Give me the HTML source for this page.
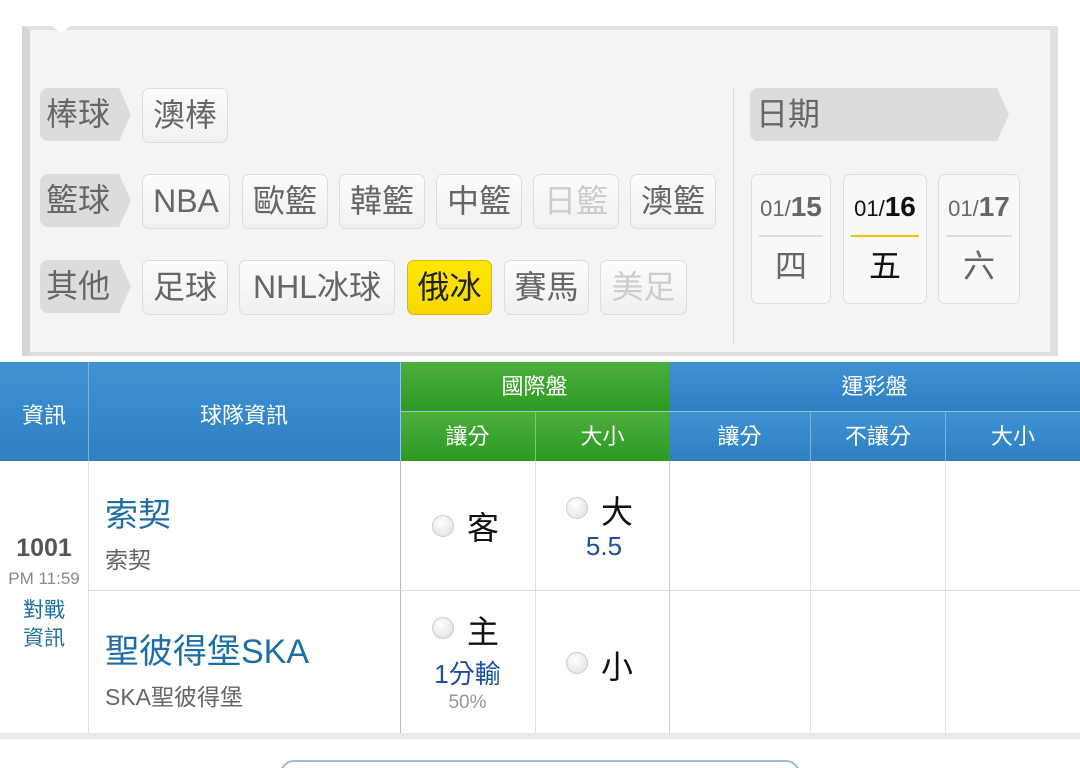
<!DOCTYPE html>
<html><head><meta charset="utf-8"><style>
*{margin:0;padding:0;box-sizing:border-box}
html,body{width:1080px;height:768px;overflow:hidden}
body{background:#fff;position:relative;font-family:"Liberation Sans","Noto Sans CJK TC",sans-serif}
.a{position:absolute}
.panel{left:22px;top:26px;width:1036px;height:330px;background:#f4f4f4;border-left:8px solid #d6d6d6;border-right:8px solid #e0e0e0;border-top:4px solid #e2e2e2;border-bottom:4px solid #dcdcdc}
.lab{position:absolute;height:53px;background:#dcdcdc;border-radius:8px 0 0 8px;color:#666;font-size:32px;line-height:53px;padding-left:6px;clip-path:polygon(0 0,calc(100% - 12px) 0,100% 50%,calc(100% - 12px) 100%,0 100%)}
.b{position:absolute;height:55px;border:1px solid #ddd;border-radius:7px;background:linear-gradient(#fcfcfc,#f0f0f0);color:#666;font-size:32px;line-height:53px;text-align:center}
.f{color:#ccc}
.y{background:linear-gradient(#ffe800,#f8d800);border-color:#d8b800;color:#222}
.d{position:absolute;top:174px;height:130px;border:1px solid #ddd;border-radius:7px;background:#f8f8f8;text-align:center;color:#666}
.d .t{height:62px;line-height:64px;font-size:22px;border-bottom:2px solid #ddd;margin:0 7px}
.d .t b{font-size:28px}
.d .w{font-size:32px;line-height:58px}
.hd{position:absolute;color:#fff;font-size:22px;text-align:center}
.bl{background:linear-gradient(#3d93d2,#2f7fc3)}
.gr{background:linear-gradient(#4caf3c,#2d9a22)}
.vl{position:absolute;width:1px;background:#ccc}
.hl{position:absolute;height:1px;background:#ddd}
.rad{position:absolute;width:22px;height:22px;border-radius:50%;border:1px solid #ccc;background:radial-gradient(circle at 40% 35%,#fff,#ddd)}
.tx{position:absolute;font-size:32px;color:#111}
</style></head><body>
<div class="a panel"></div>
<div class="a" style="left:52px;top:26px;width:0;height:0;border-left:9px solid transparent;border-right:9px solid transparent;border-top:7px solid #fff"></div>

<div class="lab" style="left:40px;top:88px;width:91px">棒球</div>
<div class="b" style="left:142px;top:88px;width:86px">澳棒</div>

<div class="lab" style="left:40px;top:174px;width:91px">籃球</div>
<div class="b" style="left:142px;top:174px;width:88px">NBA</div>
<div class="b" style="left:242px;top:174px;width:86px">歐籃</div>
<div class="b" style="left:339px;top:174px;width:86px">韓籃</div>
<div class="b" style="left:436px;top:174px;width:86px">中籃</div>
<div class="b f" style="left:533px;top:174px;width:86px">日籃</div>
<div class="b" style="left:630px;top:174px;width:86px">澳籃</div>

<div class="lab" style="left:40px;top:260px;width:91px">其他</div>
<div class="b" style="left:142px;top:260px;width:86px">足球</div>
<div class="b" style="left:239px;top:260px;width:156px">NHL冰球</div>
<div class="b y" style="left:407px;top:260px;width:85px">俄冰</div>
<div class="b" style="left:504px;top:260px;width:85px">賽馬</div>
<div class="b f" style="left:600px;top:260px;width:87px">美足</div>

<div class="a" style="left:733px;top:88px;width:1px;height:257px;background:#ddd"></div>
<div class="lab" style="left:750px;top:88px;width:259px;background:#dcdcdc">日期</div>

<div class="d" style="left:751px;width:80px"><div class="t">01/<b>15</b></div><div class="w">四</div></div>
<div class="d y" style="left:843px;width:84px;color:#111"><div class="t" style="border-color:#e8c800">01/<b>16</b></div><div class="w">五</div></div>
<div class="d" style="left:938px;width:82px"><div class="t">01/<b>17</b></div><div class="w">六</div></div>

<!-- table header -->
<div class="hd bl" style="left:0;top:362px;width:400px;height:99px"></div>
<div class="hd" style="left:0;top:398px;width:88px">資訊</div>
<div class="hd" style="left:88px;top:398px;width:312px">球隊資訊</div>
<div class="hd gr" style="left:400px;top:362px;width:269px;height:49px;line-height:49px">國際盤</div>
<div class="hd gr" style="left:400px;top:412px;width:135px;height:49px;line-height:49px">讓分</div>
<div class="hd gr" style="left:536px;top:412px;width:133px;height:49px;line-height:49px">大小</div>
<div class="hd bl" style="left:669px;top:362px;width:411px;height:49px;line-height:49px">運彩盤</div>
<div class="hd bl" style="left:669px;top:412px;width:141px;height:49px;line-height:49px">讓分</div>
<div class="hd bl" style="left:811px;top:412px;width:134px;height:49px;line-height:49px">不讓分</div>
<div class="hd bl" style="left:946px;top:412px;width:134px;height:49px;line-height:49px">大小</div>
<div class="a" style="left:400px;top:411px;width:680px;height:1px;background:#8cc"></div>
<div class="a" style="left:88px;top:362px;width:1px;height:99px;background:#7ab3de"></div>
<div class="a" style="left:400px;top:362px;width:1px;height:99px;background:#8cd"></div>
<div class="a" style="left:535px;top:412px;width:1px;height:49px;background:#7c7"></div>
<div class="a" style="left:810px;top:412px;width:1px;height:49px;background:#7ab3de"></div>
<div class="a" style="left:945px;top:412px;width:1px;height:49px;background:#7ab3de"></div>

<!-- body lines -->
<div class="vl" style="left:88px;top:461px;height:273px;background:#ddd"></div>
<div class="vl" style="left:400px;top:461px;height:273px;background:#bbb"></div>
<div class="vl" style="left:535px;top:461px;height:273px;background:#ddd"></div>
<div class="vl" style="left:669px;top:461px;height:273px;background:#ccc"></div>
<div class="vl" style="left:810px;top:461px;height:273px;background:#e4e4e4"></div>
<div class="vl" style="left:945px;top:461px;height:273px;background:#e4e4e4"></div>
<div class="hl" style="left:88px;top:590px;width:992px"></div>
<div class="a" style="left:0;top:733px;width:1080px;height:6px;background:#e8e8e8"></div>

<div class="a" style="left:0;top:534px;width:88px;text-align:center;font-size:25px;font-weight:bold;color:#555">1001</div>
<div class="a" style="left:0;top:569px;width:88px;text-align:center;font-size:17px;color:#888">PM 11:59</div>
<div class="a" style="left:0;top:597px;width:88px;text-align:center;font-size:21px;line-height:28px;color:#1f6fa8">對戰<br>資訊</div>

<div class="a" style="left:105px;top:488px;font-size:33px;color:#1c6ea4">索契</div>
<div class="a" style="left:105px;top:541px;font-size:23px;color:#666">索契</div>
<div class="a" style="left:105px;top:624px;font-size:34px;color:#1c6ea4">聖彼得堡SKA</div>
<div class="a" style="left:105px;top:678px;font-size:23px;color:#666">SKA聖彼得堡</div>

<div class="rad" style="left:432px;top:515px"></div><div class="tx" style="left:467px;top:503px">客</div>
<div class="rad" style="left:432px;top:617px"></div><div class="tx" style="left:467px;top:607px">主</div>
<div class="a" style="left:400px;top:654px;width:135px;text-align:center;font-size:26px;color:#1c4fa0">1分輸</div>
<div class="a" style="left:400px;top:692px;width:135px;text-align:center;font-size:19px;color:#999">50%</div>

<div class="rad" style="left:566px;top:497px"></div><div class="tx" style="left:601px;top:487px">大</div>
<div class="a" style="left:536px;top:531px;width:136px;text-align:center;font-size:26px;color:#1c4fa0">5.5</div>
<div class="rad" style="left:566px;top:652px"></div><div class="tx" style="left:601px;top:642px">小</div>

<div class="a" style="left:280px;top:760px;width:520px;height:30px;border:2px solid #9cbcd8;border-radius:14px"></div>
</body></html>
